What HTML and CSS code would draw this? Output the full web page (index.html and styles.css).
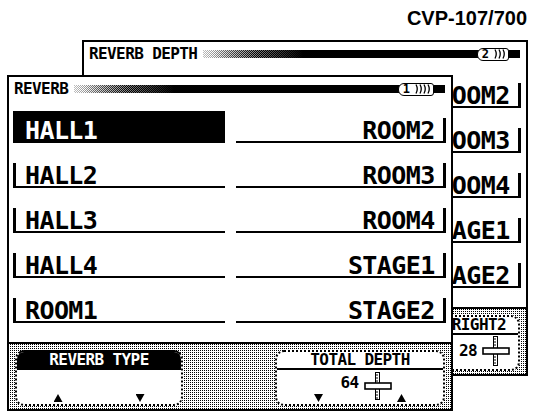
FILE: index.html
```html
<!DOCTYPE html>
<html lang="en">
<head>
<meta charset="utf-8">
<title>CVP-107/700 Reverb</title>
<link rel="stylesheet" href="styles.css">
</head>
<body>
<div class="screen">
  <div class="model">CVP-107/700</div>

  <section class="panel panel--back">
    <div class="panel-head">
      <span class="panel-title">REVERB DEPTH</span>
      <div class="level-bar">
        <span class="badge"><span class="badge-num">2</span><svg class="badge-arcs" width="13" height="10" viewBox="0 0 13 10"><path d="M1 0.5Q3.5 5 1 9.5M5 0.5Q7.5 5 5 9.5M9 0.5Q11.5 5 9 9.5" fill="none" stroke="#000" stroke-width="1.3"/></svg></span>
      </div>
    </div>
    <div class="type-list">
      <div class="type-item"><span class="type-mark"></span><span class="type-name">HALL1</span></div>
      <div class="type-item type-item--end"><span class="type-name">ROOM2</span><span class="type-mark"></span></div>
      <div class="type-item"><span class="type-mark"></span><span class="type-name">HALL2</span></div>
      <div class="type-item type-item--end"><span class="type-name">ROOM3</span><span class="type-mark"></span></div>
      <div class="type-item"><span class="type-mark"></span><span class="type-name">HALL3</span></div>
      <div class="type-item type-item--end"><span class="type-name">ROOM4</span><span class="type-mark"></span></div>
      <div class="type-item"><span class="type-mark"></span><span class="type-name">HALL4</span></div>
      <div class="type-item type-item--end"><span class="type-name">STAGE1</span><span class="type-mark"></span></div>
      <div class="type-item"><span class="type-mark"></span><span class="type-name">ROOM1</span></div>
      <div class="type-item type-item--end"><span class="type-name">STAGE2</span><span class="type-mark"></span></div>
    </div>
    <div class="panel-foot">
      <div class="soft-button soft-button--type soft-button--dark">
        <div class="soft-button-title">REVERB TYPE</div>
        <div class="soft-button-body">
          <span class="arrow arrow--up arrow--first"></span>
          <span class="arrow arrow--down arrow--second"></span>
        </div>
      </div>
      <div class="soft-button soft-button--depth soft-button--trailing">
        <div class="soft-button-title">RIGHT2</div>
        <div class="soft-button-body">
          <div class="soft-value">
            <span class="soft-value-num">28</span>
            <svg class="slider-icon" width="28" height="30" viewBox="0 0 28 30">
              <rect x="11.5" y="0.5" width="4" height="29" fill="#fff" stroke="#000" stroke-width="1"/>
              <path d="M12 3h2M12 6h2M12 9h2M12 21h2M12 24h2M12 27h2" stroke="#000" stroke-width="1"/>
              <rect x="1" y="12" width="26" height="6" fill="#fff" stroke="#000" stroke-width="1.6"/>
            </svg>
          </div>
        </div>
      </div>
    </div>
  </section>

  <section class="panel panel--front">
    <div class="panel-head">
      <span class="panel-title">REVERB</span>
      <div class="level-bar">
        <span class="badge"><span class="badge-num">1</span><svg class="badge-arcs" width="17" height="10" viewBox="0 0 17 10"><path d="M1 0.5Q3.5 5 1 9.5M5 0.5Q7.5 5 5 9.5M9 0.5Q11.5 5 9 9.5M13 0.5Q15.5 5 13 9.5" fill="none" stroke="#000" stroke-width="1.3"/></svg></span>
      </div>
    </div>
    <div class="type-list">
      <div class="type-item is-selected"><span class="type-mark"></span><span class="type-name">HALL1</span></div>
      <div class="type-item type-item--end"><span class="type-name">ROOM2</span><span class="type-mark"></span></div>
      <div class="type-item"><span class="type-mark"></span><span class="type-name">HALL2</span></div>
      <div class="type-item type-item--end"><span class="type-name">ROOM3</span><span class="type-mark"></span></div>
      <div class="type-item"><span class="type-mark"></span><span class="type-name">HALL3</span></div>
      <div class="type-item type-item--end"><span class="type-name">ROOM4</span><span class="type-mark"></span></div>
      <div class="type-item"><span class="type-mark"></span><span class="type-name">HALL4</span></div>
      <div class="type-item type-item--end"><span class="type-name">STAGE1</span><span class="type-mark"></span></div>
      <div class="type-item"><span class="type-mark"></span><span class="type-name">ROOM1</span></div>
      <div class="type-item type-item--end"><span class="type-name">STAGE2</span><span class="type-mark"></span></div>
    </div>
    <div class="panel-foot">
      <div class="soft-button soft-button--type soft-button--dark">
        <div class="soft-button-title">REVERB TYPE</div>
        <div class="soft-button-body">
          <span class="arrow arrow--up arrow--first"></span>
          <span class="arrow arrow--down arrow--second"></span>
        </div>
      </div>
      <div class="soft-button soft-button--depth">
        <div class="soft-button-title">TOTAL DEPTH</div>
        <div class="soft-button-body">
          <div class="soft-value">
            <span class="soft-value-num">64</span>
            <svg class="slider-icon" width="28" height="28" viewBox="0 0 28 28">
              <rect x="11.5" y="0.5" width="4" height="27" fill="#fff" stroke="#000" stroke-width="1"/>
              <path d="M12 3h2M12 6h2M12 9h2M12 20h2M12 23h2M12 26h2" stroke="#000" stroke-width="1"/>
              <rect x="1" y="11" width="26" height="6" fill="#fff" stroke="#000" stroke-width="1.6"/>
            </svg>
          </div>
          <span class="arrow arrow--down arrow--first"></span>
          <span class="arrow arrow--up arrow--second"></span>
        </div>
      </div>
    </div>
  </section>
</div>
</body>
</html>
```

FILE: styles.css
```css
body {
  margin: 0;
  background: #fff;
}

.screen {
  position: relative;
  width: 534px;
  height: 418px;
  overflow: hidden;
  color: #000;
  font-family: "DejaVu Sans Mono", "Liberation Mono", monospace;
}

.model {
  font: bold 20px/20px "Liberation Sans", Arial, sans-serif;
  text-align: right;
  padding: 8px 7px 0 0;
}

/* LCD windows stacked on the screen */
.panel {
  position: absolute;
  width: 446px;
  height: 336px;
  box-sizing: border-box;
  border: 2px solid #000;
  background: #fff;
  display: flex;
  flex-direction: column;
}

.panel--back {
  left: 82px;
  top: 40px;
}

.panel--front {
  left: 7px;
  top: 75px;
}

.panel-head {
  display: flex;
  align-items: center;
  gap: 6px;
  height: 14px;
  margin: 5px 6px 0 5px;
}

.panel-title,
.soft-button-title,
.soft-value-num {
  font: bold 16px/14px "DejaVu Sans Mono", "Liberation Mono", monospace;
  letter-spacing: -0.6px;
  white-space: nowrap;
}

.level-bar {
  position: relative;
  flex: 1;
  height: 8px;
  background: #000;
  display: flex;
  align-items: center;
  justify-content: flex-end;
  padding-right: 11px;
}

.level-bar::before {
  content: "";
  position: absolute;
  left: 0;
  top: 0;
  bottom: 0;
  width: 100px;
  background:
    linear-gradient(to right, rgba(255, 255, 255, 0.75), rgba(255, 255, 255, 0) 55%),
    conic-gradient(#fff 0 25%, #000 0 50%, #fff 0 75%, #000 0) 0 0 / 2px 2px;
  -webkit-mask-image: linear-gradient(to right, #000 10%, transparent);
  mask-image: linear-gradient(to right, #000 10%, transparent);
}

.badge {
  display: inline-flex;
  align-items: center;
  gap: 5px;
  height: 13px;
  box-sizing: border-box;
  padding: 0 1px 0 4px;
  border: 1.5px solid #000;
  border-radius: 6px 3px 3px 6px;
  background: #fff;
}

.badge-num {
  font: bold 12px/10px "DejaVu Sans Mono", monospace;
}

.badge-arcs {
  display: block;
}

/* type list */
.type-list {
  display: grid;
  grid-template-columns: 212px 210px;
  grid-auto-rows: 45px;
  column-gap: 11px;
  align-items: end;
  margin: 2px 5px 0 4px;
}

.type-item {
  display: flex;
  align-items: flex-end;
  gap: 9px;
  height: 32px;
  box-sizing: border-box;
  border-bottom: 2px solid #000;
}

.type-item--end {
  justify-content: flex-end;
}

.type-item.is-selected {
  background: #000;
  color: #fff;
}

.type-mark {
  flex: none;
  width: 3px;
  height: 23px;
  background: #000;
}

.type-name {
  font: bold 25px/20px "DejaVu Sans Mono", "Liberation Mono", monospace;
  letter-spacing: -0.6px;
  white-space: nowrap;
}

.type-item--end .type-name {
  margin-right: -0.6px;
}

/* footer with soft buttons */
.panel-foot {
  flex: 1;
  margin-top: 19px;
  border-top: 2px solid #000;
  display: flex;
  justify-content: space-between;
  align-items: flex-start;
  padding: 6px 6px 0;
  background: conic-gradient(#000 0 25%, #fff 0) 0 0 / 2px 2px;
}

.soft-button {
  height: 56px;
  box-sizing: border-box;
  border: 2px dotted #000;
  border-radius: 9px;
  background: #fff;
  display: flex;
  flex-direction: column;
  overflow: hidden;
}

.soft-button--type {
  width: 168px;
}

.soft-button--depth {
  width: 170px;
}

.soft-button-title {
  height: 18px;
  box-sizing: border-box;
  border-bottom: 2px solid #000;
  text-align: center;
  line-height: 16px;
}

.soft-button--dark {
  border-top-style: solid;
}

.soft-button--dark .soft-button-title {
  background: #000;
  color: #fff;
}

.soft-button-body {
  flex: 1;
  display: grid;
  grid-template-columns: 1fr 1fr;
  grid-template-rows: 1fr auto;
  justify-items: center;
  padding-bottom: 2px;
}

.arrow {
  grid-row: 2;
  width: 9px;
  height: 8px;
  background: #000;
}

.arrow--first {
  grid-column: 1;
}

.arrow--second {
  grid-column: 2;
}

.arrow--up {
  clip-path: polygon(50% 0, 100% 100%, 0 100%);
}

.arrow--down {
  clip-path: polygon(0 0, 100% 0, 50% 100%);
}

.soft-value {
  grid-column: 1 / -1;
  grid-row: 1 / -1;
  align-self: start;
  display: flex;
  gap: 5px;
  margin: 2px 0 0 12px;
}

.soft-value-num {
  margin-top: 3px;
  line-height: 16px;
}

.slider-icon {
  display: block;
}

.soft-button--trailing .soft-button-title {
  text-align: right;
  padding-right: 12px;
}

.soft-button--trailing .soft-value {
  justify-self: end;
  align-self: center;
  align-items: center;
  margin: 0 8px 0 0;
}

.soft-button--trailing .soft-value-num {
  margin-top: 0;
}
```
